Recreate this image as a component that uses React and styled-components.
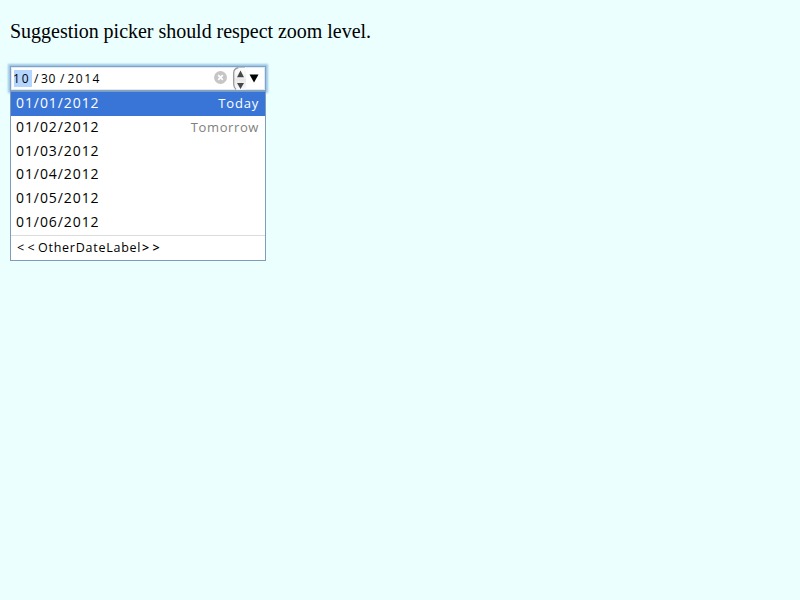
import React from 'react';
import styled, { createGlobalStyle } from 'styled-components';

const GlobalStyle = createGlobalStyle`
  body { margin: 0; background: #ebffff; }
  * { box-sizing: border-box; }
`;

const Page = styled.main`
  min-height: 600px;
  padding: 20px 10px 0;
  background: #ebffff;
`;

const Description = styled.p`
  margin: 0 0 23px;
  font: 20px/23px 'Liberation Serif', serif;
  letter-spacing: -0.025px;
  color: #000;
  white-space: nowrap;
`;

const Picker = styled.div`
  width: 256px;
  font-family: 'Open Sans', sans-serif;
  font-weight: 400;
  color: #000;
`;

const DateField = styled.div`
  display: flex;
  align-items: center;
  width: 256px;
  height: 25px;
  padding: 0 0 0 3px;
  background: #fff;
  border: 1px solid #7ea4c9;
  box-shadow: inset 0 0 0 1px #dfe8f3, 0 0 2px 2px #9cc6e4;
`;

const Segment = styled.span`
  flex: none;
  width: ${(p) => p.$width}px;
  height: 17px;
  font-size: 12px;
  line-height: 17px;
  letter-spacing: ${(p) => p.$tracking || 0}px;
  text-indent: ${(p) => p.$indent || 0}px;
  background: ${(p) => (p.$active ? '#b4d5fe' : 'transparent')};
  white-space: nowrap;
`;

const ClearIcon = styled.svg`
  flex: none;
  width: 13px;
  height: 13px;
  margin: 0 6px 2px auto;
`;

const Spinner = styled.svg`
  flex: none;
  width: 14px;
  height: 23px;
`;

const DropArrow = styled.svg`
  flex: none;
  width: 10px;
  height: 9px;
  margin: 0 6px 1px 2px;
`;

const Popup = styled.div`
  position: relative;
  width: 256px;
  height: 170px;
  background: #fff;
  border: 1px solid #7f9db9;
`;

const List = styled.ul`
  margin: 0;
  padding: 0;
  list-style: none;
`;

const Item = styled.li`
  display: flex;
  justify-content: space-between;
  height: 23.8px;
  padding: 0 6px 0 5px;
  font-size: 14px;
  line-height: 22px;
  letter-spacing: 0.92px;
  background: ${(p) => (p.$selected ? '#3875d7' : '#fff')};
  color: ${(p) => (p.$selected ? '#fff' : '#000')};
`;

const Label = styled.span`
  font-size: 13px;
  line-height: 23px;
  letter-spacing: ${(p) => p.$tracking}px;
  color: ${(p) => (p.$selected ? '#fff' : '#7f7f7f')};
`;

const Other = styled.div`
  display: flex;
  height: 25px;
  border-top: 1px solid #dcdcdc;
  padding-left: 6px;
  font-size: 12.5px;
  line-height: 23px;
`;

const Bracket = styled.span`
  flex: none;
  width: 21px;
  font-weight: ${(p) => p.$weight || 400};
  letter-spacing: 3.4px;
`;

const OtherText = styled.span`
  flex: none;
  width: 104px;
  letter-spacing: 0.75px;
`;

const suggestions = [
  { date: '01/01/2012', label: 'Today', selected: true, tracking: 0.8 },
  { date: '01/02/2012', label: 'Tomorrow', tracking: 0.6 },
  { date: '01/03/2012' },
  { date: '01/04/2012' },
  { date: '01/05/2012' },
  { date: '01/06/2012' },
];

export default function App() {
  return (
    <Page>
      <GlobalStyle />
      <Description>Suggestion picker should respect zoom level.</Description>
      <Picker>
        <DateField>
          <Segment $width={18} $active $tracking={2} $indent={-1}>10</Segment>
          <Segment $width={9} $indent={2}>/</Segment>
          <Segment $width={19} $tracking={0.6}>30</Segment>
          <Segment $width={8}>/</Segment>
          <Segment $width={35} $tracking={1.5} $indent={-0.6}>2014</Segment>
          <ClearIcon viewBox="0 0 13 13">
            <circle cx="6.5" cy="6.5" r="6.5" fill="#c6c6c6" />
            <path d="M4.2 4.2l4.6 4.6M8.8 4.2L4.2 8.8" stroke="#fff" strokeWidth="1.7" />
          </ClearIcon>
          <Spinner viewBox="0 0 14 23">
            <defs>
              <linearGradient id="spin" x2="0" y2="1">
                <stop offset="0" stopColor="#fff" />
                <stop offset="0.45" stopColor="#f3f3f3" />
                <stop offset="0.55" stopColor="#e9e9e9" />
                <stop offset="1" stopColor="#fafafa" />
              </linearGradient>
            </defs>
            <path d="M13 0.5H5Q0.5 0.5 0.5 6V17Q0.5 20.5 3.5 22.5H13z" fill="url(#spin)" />
            <path d="M5.5 0.5Q0.7 1.5 0.7 6V17Q0.7 20.5 3 22.5" fill="none" stroke="#9a9a9a" strokeWidth="1.3" />
            <path d="M5 0.5h7" stroke="#c4c4c4" />
            <path d="M4 10.3L7.5 3.5L11 10.3zM4 16h7L7.5 22z" fill="#484848" />
          </Spinner>
          <DropArrow viewBox="0 0 10 9">
            <path d="M0.5 0.5h9L5 8.5z" fill="#000" />
          </DropArrow>
        </DateField>
        <Popup>
          <List>
            {suggestions.map((s) => (
              <Item key={s.date} $selected={s.selected}>
                <span>{s.date}</span>
                {s.label && <Label $selected={s.selected} $tracking={s.tracking}>{s.label}</Label>}
              </Item>
            ))}
          </List>
          <Other>
            <Bracket>&lt;&lt;</Bracket>
            <OtherText>OtherDateLabel</OtherText>
            <Bracket $weight={600}>&gt;&gt;</Bracket>
          </Other>
        </Popup>
      </Picker>
    </Page>
  );
}
